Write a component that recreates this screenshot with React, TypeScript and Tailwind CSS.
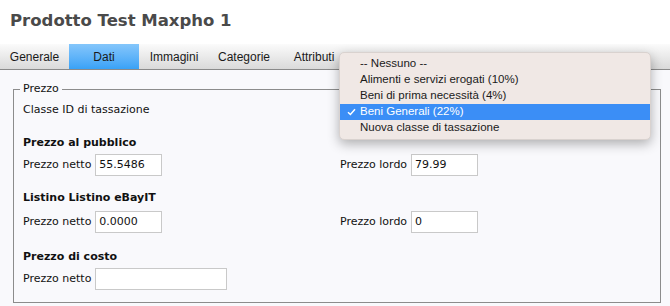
import React from "react";

const body = { fontFamily: '"DejaVu Sans", Verdana, sans-serif' };
const sys = { fontFamily: '"Liberation Sans", Arial, sans-serif' };

function Field({ label, value, w = "w-[67px]" }: { label: string; value: string; w?: string }) {
  return (
    <div className="flex items-center gap-[4px]">
      <span className="text-[11px] text-[#111]">{label}</span>
      <div className={`${w} h-[22px] border border-[#c9c9c9] bg-white flex items-center pl-[3px] text-[11px] text-[#111]`}>
        {value}
      </div>
    </div>
  );
}

export default function App() {
  const tabs = ["Generale", "Dati", "Immagini", "Categorie", "Attributi"];
  const items = [
    "-- Nessuno --",
    "Alimenti e servizi erogati (10%)",
    "Beni di prima necessità (4%)",
    "Beni Generali (22%)",
    "Nuova classe di tassazione",
  ];
  return (
    <div className="relative w-[670px] h-[306px] overflow-hidden bg-[#f9f9fc]" style={body}>
      <div className="h-[44px] bg-white pl-[10px] pt-[11px]">
        <h1 className="text-[16.5px] leading-[20px] font-bold text-[#4a4a4a]">Prodotto Test Maxpho 1</h1>
      </div>
      <div className="h-[26px] flex bg-gradient-to-b from-[#fbfbfb] to-[#dadada] border-b border-[#8a8a8a]" style={sys}>
        {tabs.map((t, i) => (
          <div
            key={t}
            className={`${i === 0 ? "w-[69px]" : "w-[70px]"} h-[25px] flex items-center justify-center text-[12px] text-[#1a1a1a] ${
              t === "Dati" ? "bg-gradient-to-b from-[#84c6fb] to-[#38a2f6]" : ""
            }`}
          >
            {t}
          </div>
        ))}
      </div>
      <fieldset className="mt-[12px] ml-[13px] mr-[9px] border border-[#8c8c8c] pl-[9px] pb-[12px]">
        <legend className="-ml-[3px] px-[3px] text-[11px] leading-[14px] text-[#111]">Prezzo</legend>
        <div className="h-[28px] flex items-center text-[11px] text-[#111]">Classe ID di tassazione</div>
        <div className="mt-[10px] h-[18px] flex items-center text-[11px] font-bold text-[#111]">Prezzo al pubblico</div>
        <div className="mt-[2px] grid grid-cols-[317px_1fr]">
          <Field label="Prezzo netto" value="55.5486" />
          <Field label="Prezzo lordo" value="79.99" />
        </div>
        <div className="mt-[13px] h-[18px] flex items-center text-[11px] font-bold text-[#111]">Listino Listino eBayIT</div>
        <div className="mt-[4px] grid grid-cols-[317px_1fr]">
          <Field label="Prezzo netto" value="0.0000" />
          <Field label="Prezzo lordo" value="0" />
        </div>
        <div className="mt-[15px] h-[18px] flex items-center text-[11px] font-bold text-[#111]">Prezzo di costo</div>
        <div className="mt-[2px]">
          <Field label="Prezzo netto" value="" w="w-[132px]" />
        </div>
      </fieldset>

      <div
        className="absolute left-[339px] top-[52px] w-[312px] h-[88px] rounded-[5px] bg-[#f0e8e5] border border-[#d9d2cf] shadow-[0_4px_12px_rgba(0,0,0,0.3)] py-[3px]"
        style={sys}
      >
        {items.map((it) => {
          const sel = it === "Beni Generali (22%)";
          return (
            <div
              key={it}
              className={`h-[16px] flex items-center text-[11.5px] ${sel ? "bg-[#3b8ef6] text-white" : "text-[#1a1a1a]"}`}
            >
              <div className="w-[20px] flex justify-end pr-[4px]">
                {sel && (
                  <svg width="9" height="8" viewBox="0 0 9 8">
                    <path d="M1 4.2 L3.4 6.5 L8 1.2" stroke="white" strokeWidth="1.5" fill="none" />
                  </svg>
                )}
              </div>
              <span>{it}</span>
            </div>
          );
        })}
      </div>
    </div>
  );
}
